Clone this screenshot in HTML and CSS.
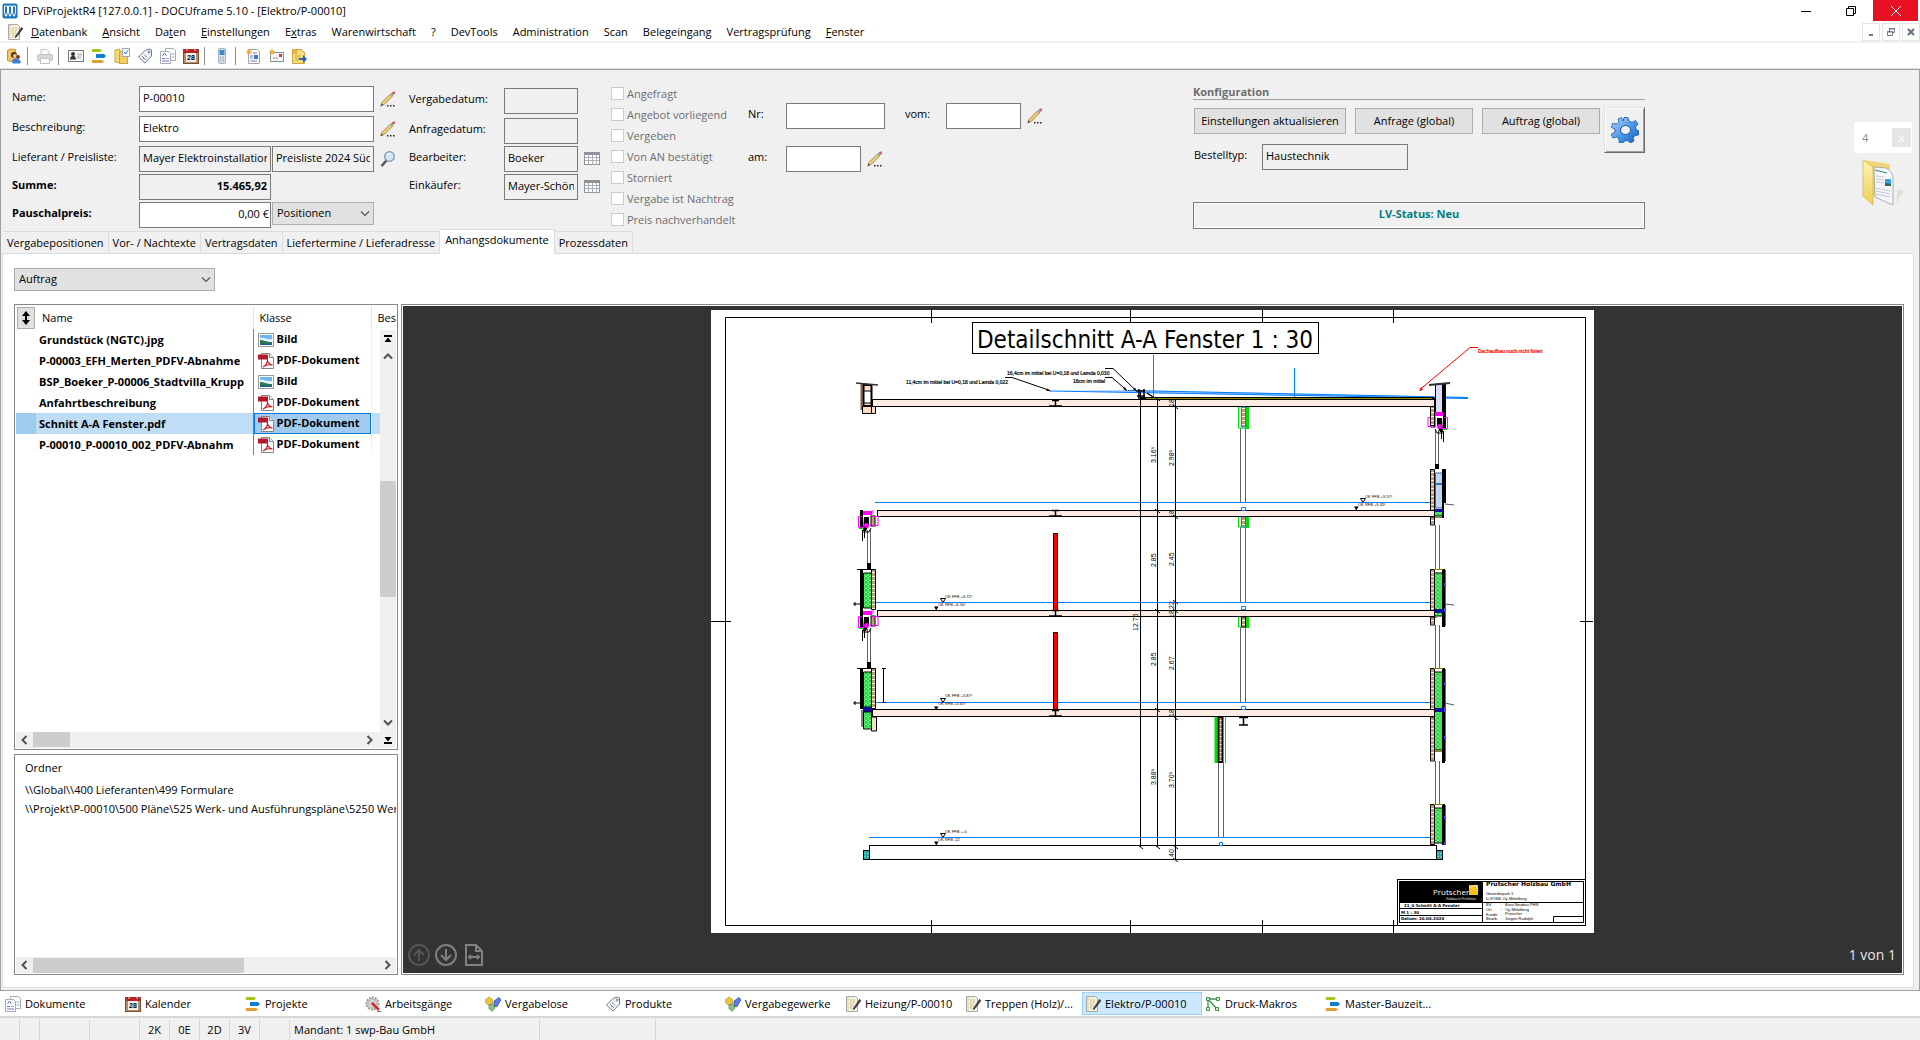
FILE: index.html
```html
<!DOCTYPE html>
<html lang="de">
<head>
    <meta charset="UTF-8">
    <meta name="viewport" content="width=device-width, initial-scale=1.0">
    <title>DFViProjektR4 [127.0.0.1] - DOCUframe 5.10 - [Elektro/P-00010]</title>
    <link rel="stylesheet" href="styles.css">
</head>
<body>
    <!-- Icon sprite -->
    <svg class="sprite" aria-hidden="true">
        <defs>
            <linearGradient id="gGear" x1="0" y1="0" x2="1" y2="1">
                <stop offset="0" stop-color="#b9d6f5"/>
                <stop offset="0.5" stop-color="#4f9ae8"/>
                <stop offset="1" stop-color="#0d5cc0"/>
            </linearGradient>
            <linearGradient id="gFolder" x1="0" y1="0" x2="0" y2="1">
                <stop offset="0" stop-color="#fff2b4"/>
                <stop offset="1" stop-color="#f0d055"/>
            </linearGradient>
        </defs>
        <symbol id="i-app" viewBox="0 0 16 16">
            <rect x="0.5" y="0.5" width="15" height="15" rx="2" fill="#1d75bb"/>
            <path d="M2.5 3h3v6l-1 4h-1l-1-4zM6.5 3h3v6l-1 4h-1l-1-4zM10.5 3h3v6l-1 4h-1l-1-4z" fill="#1d75bb" stroke="#fff" stroke-width="1"/>
        </symbol>
        <symbol id="i-note" viewBox="0 0 16 16">
            <path d="M1.5 .5h9l2 2v13h-11z" fill="#f4f2e6" stroke="#a9a9a9"/>
            <path d="M3 1v14" stroke="#b9a777" stroke-dasharray="1 1"/>
            <path d="M5 4h5M5 6h5M5 8h4M5 10h4M5 12h5" stroke="#d9b34c" stroke-dasharray="2 1"/>
            <path d="M14.5 3.5L9 11.5l-1 2 2-1 6-8z" fill="#444" stroke="#222" stroke-width="0.6"/>
        </symbol>
        <symbol id="i-user" viewBox="0 0 16 16">
            <path d="M1.5 2.5l3-1.5 5 .5v9l-4 3-4-1z" fill="#f1c55c" stroke="#c99327"/>
            <circle cx="8" cy="7" r="3" fill="#5a3418"/>
            <circle cx="9" cy="8" r="2" fill="#edc19a"/>
            <circle cx="12" cy="9" r="2" fill="#6b4020"/>
            <path d="M6 14c0-4 6-5 9 0l-1 1.500H7z" fill="#3d7fd8"/>
        </symbol>
        <symbol id="i-printer" viewBox="0 0 16 16">
            <path d="M4 6V1.500h6l2 2V6" fill="#fafafa" stroke="#c8c8c8"/>
            <rect x="0.500" y="6.500" width="15" height="6" rx="1" fill="#d8d8d8" stroke="#c0c0c0"/>
            <rect x="3.500" y="10.500" width="9" height="5" fill="#fff" stroke="#c4c4c4"/>
        </symbol>
        <symbol id="i-card" viewBox="0 0 16 16">
            <rect x="0.500" y="2.500" width="15" height="11" fill="#fafafa" stroke="#7a7a7a"/>
            <circle cx="5" cy="6" r="2" fill="#333"/>
            <path d="M2 11.500c0-5 6-5 6 0z" fill="#333"/>
            <path d="M9 6h5M9 8h5M9 10h4" stroke="#aaa"/>
        </symbol>
        <symbol id="i-bars" viewBox="0 0 16 16">
            <path d="M1 1h8l2 1.500L9 4H1z" fill="#a5c514"/>
            <path d="M5 6h8l2 2-2 2H5z" fill="#0f7fd0"/>
            <path d="M1 12h10l2 1.500-2 1.500H1z" fill="#e0a033"/>
        </symbol>
        <symbol id="i-shelf" viewBox="0 0 16 16">
            <path d="M1 2l5-1v14l-5-1z" fill="#f5d978" stroke="#cba53a"/>
            <rect x="5.500" y="3.500" width="8" height="12" fill="#f1cd62" stroke="#cba53a"/>
            <rect x="8.500" y="0.500" width="7" height="8" fill="#fff" stroke="#9ab"/>
            <path d="M10 4l1.500 2L14 2.500" fill="none" stroke="#1e6fc4"/>
        </symbol>
        <symbol id="i-tag" viewBox="0 0 16 16">
            <path d="M1.500 9L8 2.500 12 1l2.500 1v6L8 15z" fill="#f2f5f8" stroke="#6f7c88"/>
            <circle cx="12" cy="4" r="1" fill="#fff" stroke="#6f7c88"/>
            <path d="M5 8l4 4M7 6.500l3 3M6 10l1 1" stroke="#7886a0"/>
        </symbol>
        <symbol id="i-docs" viewBox="0 0 16 16">
            <path d="M5.500.5h8l2 2v10h-10z" fill="#fff" stroke="#a8adb5"/>
            <path d="M.5 3.500h8l2 2v10H.5z" fill="#fff" stroke="#a8adb5"/>
            <path d="M2.500 8l2-3 2 3M2 10.500h3M2 13h7" fill="none" stroke="#6674c8"/>
            <path d="M6 10.500h3M11.500 6h3M11.500 9h3" stroke="#7fb0c8"/>
        </symbol>
        <symbol id="i-cal" viewBox="0 0 16 16">
            <rect x="0.500" y="1.500" width="15" height="14" fill="#b58d66" stroke="#7a5035"/>
            <rect x="1" y="1" width="14" height="4" fill="#b5241c"/>
            <rect x="3" y="5" width="10" height="9" fill="#f4efe8"/>
            <path d="M4 0v3M12 0v3" stroke="#ddd"/>
            <text x="8" y="12" class="cal-day">28</text>
        </symbol>
        <symbol id="i-phone" viewBox="0 0 16 16">
            <rect x="4.500" y="0.500" width="7" height="15" rx="1.500" fill="#dfe7ee" stroke="#9fb0bf"/>
            <rect x="5.500" y="2" width="5" height="5" fill="#3a8ad6"/>
            <path d="M6 9h4M6 11h4M6 13h4" stroke="#8796a5" stroke-dasharray="1 .5"/>
        </symbol>
        <symbol id="i-newdoc" viewBox="0 0 16 16">
            <path d="M3.500 1.500h9l2 2v12h-11z" fill="#fff" stroke="#a0a6ae"/>
            <path d="M8 5h4M5 8h3M5 10h3M5 13h7" stroke="#6f83a8"/>
            <rect x="9" y="7" width="4" height="4" fill="#3f6fd0"/>
            <path d="M4 1v6M1 4h6M2 2l4 4M6 2L2 6" stroke="#f0a62c"/>
        </symbol>
        <symbol id="i-newmail" viewBox="0 0 16 16">
            <rect x="2.500" y="4.500" width="13" height="9" fill="#f7f7f7" stroke="#8f8f8f"/>
            <rect x="11" y="6" width="3" height="3" fill="#d23b30"/>
            <path d="M5 10h5" stroke="#999"/>
            <path d="M4 1v6M1 4h6M2 2l4 4M6 2L2 6" stroke="#f0a62c"/>
        </symbol>
        <symbol id="i-export" viewBox="0 0 16 16">
            <path d="M1.500 1.500h9l3 3v11h-12z" fill="#f7dd82" stroke="#c8a33e"/>
            <path d="M4 8h6M4 10h4M4 12h4" stroke="#c8a33e"/>
            <path d="M8 10h4V7l4 4-4 4v-3H8z" fill="#1f62c8"/>
            <path d="M4 1v6M1 4h6M2 2l4 4M6 2L2 6" stroke="#f0a62c"/>
        </symbol>
        <symbol id="i-pencil" viewBox="0 0 16 16">
            <path d="M1 14.500l1-3L10.500 3l2 2-8.500 8.500z" fill="#f5d272" stroke="#8a6a32" stroke-width="0.8"/>
            <path d="M.3 15.500l1.200-3 1.500 1.500z" fill="#5a4a38"/>
            <path d="M11.500 2l1.500-1.500h2v2L13.500 4z" fill="#d9606a"/>
            <path d="M10 3.500L11.500 2l2 2L12 5.500z" fill="#7fae8e"/>
            <path d="M7 14h1.500v1.500H7zM10 14h1.500v1.500H10zM13 14h1.500v1.500H13z" fill="#222"/>
        </symbol>
        <symbol id="i-lens" viewBox="0 0 16 16">
            <path d="M6.500 9.500L1.500 15" stroke="#555" stroke-width="2.500"/>
            <circle cx="9.500" cy="5.500" r="4.800" fill="#cfe6fa" stroke="#7e96ad" stroke-width="1.300"/>
            <path d="M7 4.500c1-2 3-2 4-1.500" fill="none" stroke="#fff"/>
        </symbol>
        <symbol id="i-grid" viewBox="0 0 16 14">
            <rect x="0.500" y="0.500" width="15" height="12" fill="#fff" stroke="#8d9399"/>
            <path d="M0 1.500h16" stroke="#8d9399" stroke-width="3"/>
            <path d="M1 5.500h14M1 8.500h14M4.500 3v10M8.500 3v10M12.500 3v10" stroke="#a9afb6"/>
        </symbol>
        <symbol id="i-gear" viewBox="0 0 28 26">
            <path d="M12 4l1-3.500h4L18 4l3 1.500 3.500-2 2.500 3.500-2.500 3 .5 2.500 3 1.500-.5 4-3.500.5-2 2.500 1 3-3.500 2-3-2.500-3 .5-1.500 2.500-4-1V22l-2.500-2-3.500 1-2-3.500L4 15v-3L.5 10.500l1-4L6 7l2-2-1-3 3.500-1.500z" fill="url(#gGear)" stroke="#1456a8" stroke-width="0.800"/>
            <ellipse cx="14.500" cy="13" rx="5" ry="4.500" fill="#efefef" stroke="#1456a8"/>
        </symbol>
        <symbol id="i-folder" viewBox="0 0 42 48">
            <path d="M34 44l8-12-6-2z" fill="#ddd"/>
            <path d="M1 1l27 4v34l-17-2z" fill="#f0d676"/>
            <path d="M12 8l12 1c5 3 7 6 7 10v27l-18-8z" fill="#f4f6fa" stroke="#8b95a0" stroke-width="0.700"/>
            <path d="M13 11l12 3" stroke="#1b8a8a"/>
            <path d="M14 17l8 1M14 20l8 1M14 23l8 1M14 29l14 3M14 32l14 3M14 35l14 3" stroke="#c3cad6"/>
            <rect x="23" y="20" width="6" height="7" fill="#3aa2d8"/>
            <path d="M23 27v-3l6 1v2z" fill="#2d6e4d"/>
            <path d="M1 1l10 7v38L1 37z" fill="url(#gFolder)" stroke="#d6b341" stroke-width="0.700"/>
        </symbol>
        <symbol id="i-image" viewBox="0 0 16 14">
            <rect x="0.500" y="0.500" width="15" height="13" fill="#fff" stroke="#9a9a9a"/>
            <rect x="2" y="2" width="12" height="10" fill="#6cb6ea"/>
            <path d="M2 5c4-1 7 2 12 1v3H2z" fill="#e6f4fb"/>
            <path d="M2 7c4 0 6 2 12 2v3H2z" fill="#2b7a4f"/>
            <path d="M2 10.500h12V12H2z" fill="#1e5f9a"/>
        </symbol>
        <symbol id="i-pdf" viewBox="0 0 16 16">
            <path d="M3.500.5h8l4 4v11h-12z" fill="#fff" stroke="#8c8080"/>
            <path d="M11.500.5v4h4" fill="#eee" stroke="#8c8080"/>
            <rect x="0" y="1.500" width="10" height="5" fill="#b3182a"/>
            <path d="M5 14c3-1 5-5 4.500-7.500C9 8 11 11.500 14.500 12 11 11 7.500 12 5 14z" fill="none" stroke="#c0202c" stroke-width="1.200"/>
        </symbol>
        <symbol id="i-work" viewBox="0 0 16 16">
            <circle cx="7.500" cy="7.500" r="6" fill="#e4e4e4" stroke="#9a9a9a" stroke-width="2" stroke-dasharray="2 1"/>
            <circle cx="7.500" cy="7.500" r="4" fill="#e4e4e4" stroke="#aaa"/>
            <circle cx="7.500" cy="7.500" r="1.500" fill="#fff" stroke="#999"/>
            <path d="M7 7l7 7" stroke="#cf2b2b" stroke-width="2.500"/>
            <path d="M12 15.500h4" stroke="#777"/>
        </symbol>
        <symbol id="i-lots" viewBox="0 0 16 16">
            <path d="M0 4l4-3 4 3-1 4-4 1-3-3z" fill="#e8c63c" stroke="#b08f1e" stroke-width="0.700"/>
            <path d="M9 5l5-3.500 2 2-4 7H9z" fill="#5f7ae8" stroke="#2b3f9f" stroke-width="0.700"/>
            <path d="M4 9l4-1 2 4-3 3.500-3-3z" fill="#8fbf88" stroke="#55845a" stroke-width="0.700"/>
        </symbol>
        <symbol id="i-macro" viewBox="0 0 16 16">
            <path d="M3 3l9 0M3 3v9M3 3l8 9" fill="none" stroke="#3e8f4c" stroke-width="1.300"/>
            <path d="M1.500 1.500h3v3h-3zM1.500 11.500h3v3h-3zM11.500 1.500h3v3h-3zM10.500 11.500h3v3h-3z" fill="#d7eed9" stroke="#3e8f4c"/>
        </symbol>
        <symbol id="i-chevron" viewBox="0 0 10 6"><path d="M1 .5l4 4 4-4" fill="none" stroke="#555" stroke-width="1.200"/></symbol>
        <symbol id="i-left" viewBox="0 0 8 10"><path d="M6.500 1l-4 4 4 4" fill="none" stroke="#505050" stroke-width="2"/></symbol>
        <symbol id="i-right" viewBox="0 0 8 10"><path d="M1.500 1l4 4-4 4" fill="none" stroke="#505050" stroke-width="2"/></symbol>
        <symbol id="i-up" viewBox="0 0 10 8"><path d="M1 6.500l4-4 4 4" fill="none" stroke="#505050" stroke-width="2"/></symbol>
        <symbol id="i-down" viewBox="0 0 10 8"><path d="M1 1.500l4 4 4-4" fill="none" stroke="#505050" stroke-width="2"/></symbol>
        <symbol id="i-top" viewBox="0 0 8 8"><path d="M0 0h8v2H0zM4 2.500L7.500 7h-7z" fill="#000"/></symbol>
        <symbol id="i-bottom" viewBox="0 0 8 8"><path d="M0 6h8v2H0zM4 5.500L.5 1h7z" fill="#000"/></symbol>
    </svg>

    <header class="titlebar">
        <svg class="icon"><use href="#i-app"/></svg>
        <span class="title">DFViProjektR4 [127.0.0.1] - DOCUframe 5.10 - [Elektro/P-00010]</span>
        <button class="win-btn" aria-label="Minimieren"><svg width="10" height="10"><path d="M0 5.500h10" stroke="#000"/></svg></button>
        <button class="win-btn" aria-label="Wiederherstellen"><svg width="10" height="10"><path d="M.5 2.500h7v7h-7zM2.500 2V.5h7v7H8" fill="none" stroke="#000"/></svg></button>
        <button class="win-btn close" aria-label="Schließen"><svg width="10" height="10"><path d="M0 0l10 10M10 0L0 10" stroke="#fff"/></svg></button>
    </header>

    <nav class="menubar">
        <svg class="icon"><use href="#i-note"/></svg>
        <button><u>D</u>atenbank</button>
        <button><u>A</u>nsicht</button>
        <button>Da<u>t</u>en</button>
        <button><u>E</u>instellungen</button>
        <button>E<u>x</u>tras</button>
        <button>Warenwirtschaft</button>
        <button>?</button>
        <button>DevTools</button>
        <button>Administration</button>
        <button>Scan</button>
        <button>Belegeingang</button>
        <button>Vertragsprüfung</button>
        <button><u>F</u>enster</button>
        <div class="mdi">
            <button aria-label="Fenster minimieren"><svg width="10" height="10"><path d="M3 8h4" stroke="#6b7a8a" stroke-width="2"/></svg></button>
            <button aria-label="Fenster wiederherstellen"><svg width="10" height="10"><path d="M1.500 4.500h5v4h-5zM3.500 4V1.500h5v4H7M1 5h6M3 2h6" fill="none" stroke="#6b7a8a"/></svg></button>
            <button aria-label="Fenster schließen"><svg width="10" height="10"><path d="M2 2l6 6M8 2L2 8" stroke="#5f6f80" stroke-width="2"/></svg></button>
        </div>
    </nav>

    <div class="toolbar">
        <button aria-label="Adressen"><svg class="icon"><use href="#i-user"/></svg></button>
        <span class="sep"></span>
        <button aria-label="Drucken"><svg class="icon"><use href="#i-printer"/></svg></button>
        <span class="sep"></span>
        <button aria-label="Kontakte"><svg class="icon"><use href="#i-card"/></svg></button>
        <button aria-label="Projekte"><svg class="icon"><use href="#i-bars"/></svg></button>
        <button aria-label="Ablage"><svg class="icon"><use href="#i-shelf"/></svg></button>
        <button aria-label="Produkte"><svg class="icon"><use href="#i-tag"/></svg></button>
        <button aria-label="Dokumente"><svg class="icon"><use href="#i-docs"/></svg></button>
        <button aria-label="Kalender"><svg class="icon"><use href="#i-cal"/></svg></button>
        <span class="sep"></span>
        <button aria-label="Telefon"><svg class="icon"><use href="#i-phone"/></svg></button>
        <span class="sep"></span>
        <button aria-label="Neues Dokument"><svg class="icon"><use href="#i-newdoc"/></svg></button>
        <button aria-label="Neue E-Mail"><svg class="icon"><use href="#i-newmail"/></svg></button>
        <button aria-label="Export"><svg class="icon"><use href="#i-export"/></svg></button>
    </div>

    <main class="workspace">
        <form class="form">
            <div class="general">
                <label for="name">Name:</label>
                <input class="wide" id="name" value="P-00010">
                <button type="button" class="edit" aria-label="Name bearbeiten"><svg class="icon"><use href="#i-pencil"/></svg></button>

                <label for="beschreibung">Beschreibung:</label>
                <input class="wide" id="beschreibung" value="Elektro">
                <button type="button" class="edit" aria-label="Beschreibung bearbeiten"><svg class="icon"><use href="#i-pencil"/></svg></button>

                <label for="lieferant">Lieferant / Preisliste:</label>
                <input class="half" id="lieferant" value="Mayer Elektroinstallation" readonly>
                <input id="preisliste" aria-label="Preisliste" value="Preisliste 2024 Süd" readonly>
                <button type="button" class="edit" aria-label="Suchen"><svg class="icon"><use href="#i-lens"/></svg></button>

                <label class="strong" for="summe">Summe:</label>
                <input class="half sum" id="summe" value="15.465,92" readonly>
                <span></span><span></span>

                <label class="strong" for="pauschal">Pauschalpreis:</label>
                <input class="half price" id="pauschal" value="0,00 €">
                <div class="select">
                    <select aria-label="Bezug"><option>Positionen</option></select>
                    <svg class="chevron"><use href="#i-chevron"/></svg>
                </div>
            </div>

            <div class="dates">
                <label for="vergabe">Vergabedatum:</label>
                <input id="vergabe" readonly><span></span>
                <label for="anfrage">Anfragedatum:</label>
                <input id="anfrage" readonly><span></span>
                <label for="bearbeiter">Bearbeiter:</label>
                <input id="bearbeiter" value="Boeker" readonly>
                <button type="button" class="edit" aria-label="Bearbeiter wählen"><svg class="icon"><use href="#i-grid"/></svg></button>
                <label for="einkaeufer">Einkäufer:</label>
                <input id="einkaeufer" value="Mayer-Schön" readonly>
                <button type="button" class="edit" aria-label="Einkäufer wählen"><svg class="icon"><use href="#i-grid"/></svg></button>
            </div>

            <div class="checks">
                <label><input type="checkbox" disabled>Angefragt</label>
                <label><input type="checkbox" disabled>Angebot vorliegend</label>
                <label><input type="checkbox" disabled>Vergeben</label>
                <label><input type="checkbox" disabled>Von AN bestätigt</label>
                <label><input type="checkbox" disabled>Storniert</label>
                <label><input type="checkbox" disabled>Vergabe ist Nachtrag</label>
                <label><input type="checkbox" disabled>Preis nachverhandelt</label>
            </div>

            <div class="offer">
                <div class="offer-row">
                    <label for="nr">Nr:</label>
                    <input class="nr" id="nr">
                    <label class="vom" for="vom">vom:</label>
                    <input id="vom">
                    <button type="button" class="edit" aria-label="Angebot bearbeiten"><svg class="icon"><use href="#i-pencil"/></svg></button>
                </div>
                <div class="offer-row">
                    <label for="am">am:</label>
                    <input id="am">
                    <button type="button" class="edit" aria-label="Datum bearbeiten"><svg class="icon"><use href="#i-pencil"/></svg></button>
                </div>
            </div>

            <div class="config">
                <h2>Konfiguration</h2>
                <div class="config-body">
                    <div class="config-actions">
                        <button type="button" class="btn">Einstellungen aktualisieren</button>
                        <button type="button" class="btn">Anfrage (global)</button>
                        <button type="button" class="btn">Auftrag (global)</button>
                        <div class="order-type">
                            <label for="bestelltyp">Bestelltyp:</label>
                            <input id="bestelltyp" value="Haustechnik" readonly>
                        </div>
                    </div>
                    <button type="button" class="gear" aria-label="Einstellungen"><svg width="28" height="26"><use href="#i-gear"/></svg></button>
                </div>
                <div class="status">LV-Status: Neu</div>
            </div>

            <div class="drop">
                <div class="count"><span>4</span><button type="button" aria-label="Leeren">x</button></div>
                <svg width="42" height="48"><use href="#i-folder"/></svg>
            </div>
        </form>

        <div class="tabs" role="tablist">
            <button role="tab">Vergabepositionen</button>
            <button role="tab">Vor- / Nachtexte</button>
            <button role="tab">Vertragsdaten</button>
            <button role="tab">Liefertermine / Lieferadresse</button>
            <button role="tab" class="active">Anhangsdokumente</button>
            <button role="tab">Prozessdaten</button>
        </div>

        <section class="tab-page">
            <div class="select type-select">
                <select aria-label="Dokumentart"><option>Auftrag</option></select>
                <svg class="chevron"><use href="#i-chevron"/></svg>
            </div>

            <div class="panes">
                <div class="left">
                    <div class="box files">
                        <div class="file-area">
                            <table>
                                <colgroup><col class="c-sort"><col class="c-name"><col class="c-class"><col></colgroup>
                                <thead>
                                    <tr>
                                        <th><button class="sort" aria-label="Sortierung"><svg width="10" height="14"><path d="M5 0l4 5H6v4h3l-4 5-4-5h3V5H1z"/></svg></button></th>
                                        <th>Name</th><th>Klasse</th><th>Beschreibung</th>
                                    </tr>
                                </thead>
                                <tbody>
                                    <tr><td></td><td>Grundstück (NGTC).jpg</td><td><svg class="icon"><use href="#i-image"/></svg>Bild</td><td></td></tr>
                                    <tr><td></td><td>P-00003_EFH_Merten_PDFV-Abnahme</td><td><svg class="icon"><use href="#i-pdf"/></svg>PDF-Dokument</td><td></td></tr>
                                    <tr><td></td><td>BSP_Boeker_P-00006_Stadtvilla_Krupp</td><td><svg class="icon"><use href="#i-image"/></svg>Bild</td><td></td></tr>
                                    <tr><td></td><td>Anfahrtbeschreibung</td><td><svg class="icon"><use href="#i-pdf"/></svg>PDF-Dokument</td><td></td></tr>
                                    <tr class="selected"><td></td><td>Schnitt A-A Fenster.pdf</td><td><svg class="icon"><use href="#i-pdf"/></svg>PDF-Dokument</td><td></td></tr>
                                    <tr><td></td><td>P-00010_P-00010_002_PDFV-Abnahm</td><td><svg class="icon"><use href="#i-pdf"/></svg>PDF-Dokument</td><td></td></tr>
                                </tbody>
                            </table>
                            <div class="vscroll">
                                <svg width="8" height="8"><use href="#i-top"/></svg>
                                <svg width="10" height="8"><use href="#i-up"/></svg>
                                <div class="track"><div class="thumb"></div></div>
                                <svg width="10" height="8"><use href="#i-down"/></svg>
                            </div>
                        </div>
                        <div class="hscroll">
                            <svg width="8" height="10"><use href="#i-left"/></svg>
                            <div class="thumb short"></div>
                            <svg class="end" width="8" height="10"><use href="#i-right"/></svg>
                            <svg class="last" width="8" height="8"><use href="#i-bottom"/></svg>
                        </div>
                    </div>
                    <div class="box folders">
                        <div class="folder-list">
                            <h3>Ordner</h3>
                            <ul>
                                <li>\\Global\\400 Lieferanten\499 Formulare</li>
                                <li>\\Projekt\P-00010\500 Pläne\525 Werk- und Ausführungspläne\5250 Werkpläne</li>
                            </ul>
                        </div>
                        <div class="hscroll">
                            <svg width="8" height="10"><use href="#i-left"/></svg>
                            <div class="thumb long"></div>
                            <svg class="end" width="8" height="10"><use href="#i-right"/></svg>
                        </div>
                    </div>
                </div>

                <div class="viewer">
                    <svg class="sheet" viewBox="711 310 883 623" role="img" aria-label="Detailschnitt A-A Fenster">
                        <defs>
                            <pattern id="insul" width="4" height="4" patternUnits="userSpaceOnUse">
                                <rect width="4" height="4" fill="#fff"/>
                                <path d="M0 0l2 2 2-2M0 3l4 0" fill="none" stroke="#10d82c" stroke-width="1.300"/>
                            </pattern>
                            <pattern id="wood" width="6" height="4" patternUnits="userSpaceOnUse">
                                <rect width="6" height="4" fill="#c49a72"/>
                                <path d="M0 .5h6" stroke="#fff"/>
                            </pattern>
                            <pattern id="teal" width="3" height="3" patternUnits="userSpaceOnUse">
                                <rect width="3" height="3" fill="#1fa8a8"/>
                                <path d="M0 2l2-1" stroke="#bfe8e8" stroke-width="0.600"/>
                            </pattern>
                            <g id="beam"><path d="M-3 .5h7M.5 0v6M-6 6h13" stroke="#000" stroke-width="1.500"/></g>
                            <g id="level">
                                <path d="M4.500-4.500h5l-2.500 4z" fill="#fff" stroke="#000"/>
                                <path d="M-2 3.500h4.500L.3 7.500z"/>
                            </g>
                            <!-- window head with roller shutter box -->
                            <g id="head">
                                <path d="M2 0h3v18H2zM6 7h5v8l-3 6H5z"/>
                                <path d="M5 2h9M5 4h9" stroke="#ff00ff" stroke-width="2"/>
                                <rect x="13" y="6" width="4" height="10" fill="#c49a72" stroke="#000"/>
                                <path d="M4 6.500H.5v11H6M14 6.500h6v9h-6M15 0v4" fill="none" stroke="#ff00ff"/>
                                <circle cx="8.500" cy="15.500" r="2.500" fill="#ff00ff"/>
                                <path d="M1 18.500h4" stroke="#00e000"/>
                                <path d="M4.500 20v11M6.500 20v8M5 22h6l2-4" fill="none" stroke="#000"/>
                            </g>
                        </defs>
                        <rect x="711" y="310" width="883" height="623" fill="#fff"/>
                        <g class="ink">
                            <path d="M725.500 317.500h860v608h-860z"/>
                            <path d="M931.500 310v13M1130.500 310v13M1262.500 310v13M1393.500 310v13M931.500 920v13M1130.500 920v13M1262.500 920v13M1393.500 920v13M711 621.500h20M1580 621.500h13"/>
                            <rect x="972.500" y="322.500" width="346" height="31"/>
                        </g>
                        <text class="sheet-title" x="1145" y="348">Detailschnitt A-A Fenster 1 : 30</text>

                        <!-- roof insulation and finished floor levels -->
                        <path d="M1128 390l340 7v2l-418-8z" fill="#a9c8ff"/>
                        <g class="blue">
                            <path d="M1128 390.500l340 7M1050 391l418 7.500M1153.500 355v43M1294.500 368v31"/>
                            <path d="M875 502.500h556M875 602.500h556M876 702.500h555M869 837.500h562"/>
                        </g>

                        <!-- slabs -->
                        <g class="slab">
                            <rect x="872.500" y="399.500" width="562" height="7"/>
                            <rect x="877.500" y="510.500" width="557" height="6"/>
                            <rect x="877.500" y="610.500" width="557" height="6"/>
                            <rect x="872.500" y="709.500" width="562" height="7"/>
                        </g>
                        <path d="M1140 398h294" stroke="#000" stroke-width="2"/>
                        <path d="M1146 398.500h286" stroke="#8a8a00"/>
                        <rect class="ink" x="869.500" y="845.500" width="567" height="14"/>
                        <rect x="863.500" y="850.500" width="6" height="9" fill="url(#teal)" stroke="#000"/>
                        <rect x="1436.500" y="850.500" width="6" height="9" fill="url(#teal)" stroke="#000"/>
                        <use href="#beam" x="1055" y="400"/>
                        <use href="#beam" x="1055" y="510"/>
                        <use href="#beam" x="1055" y="610"/>
                        <use href="#beam" x="1055" y="710"/>
                        <path d="M1239 717.500h9M1239 725h9M1243.500 717v8" stroke="#000" stroke-width="1.500"/>
                        <path d="M1053.500 533.500h4v77h-4zM1053.500 632.500h4v77h-4z" fill="#f00" stroke="#000"/>

                        <!-- columns -->
                        <path class="glass" d="M1240.500 428v74M1245.500 428v74M1240.500 527v75M1245.500 527v75M1240.500 627v75M1245.500 627v75M1218.500 763v74M1223.500 763v74"/>
                        <g fill="#fff" stroke="#00e000">
                            <path d="M1238.500 407v21h10v-21M1238.500 517v10h10v-10M1238.500 617v10h10v-10"/>
                            <path d="M1247.500 407v22M1247.500 517v11M1247.500 617v11M1216 717v46" stroke-width="3"/>
                            <path d="M1225.500 717v46"/>
                        </g>
                        <path d="M1241.500 407h4v20h-4zM1241.500 517h4v10h-4z" fill="url(#wood)" stroke="#0080ff"/>
                        <path d="M1241.500 617h4v10h-4z" fill="url(#wood)" stroke="#000"/>
                        <path d="M1218.500 717h4v45h-4z" fill="url(#wood)" stroke="#000" stroke-width="2"/>
                        <path class="blue" d="M1241.500 507.500h4v3h-4zM1241.500 606.500h4v3h-4zM1241.500 706.500h4v3h-4zM1219.500 842.500h3v3h-3z"/>

                        <!-- left wall -->
                        <path d="M861.500 384v26" stroke="#8a5a3a" stroke-width="2"/>
                        <path d="M863.500 385h8v21h-8z" fill="#fcd9c8" stroke="#000" stroke-width="2"/>
                        <path d="M864 391h7v12h-7z" fill="#fff" stroke="#000"/>
                        <path d="M862.500 406.500h13v7h-13zM871.500 400v13" fill="#fcd9c8" stroke="#000"/>
                        <path d="M856 383l22 2" stroke="#333" stroke-width="1.500"/>
                        <path class="glass" d="M867.500 530v36M870.500 530v36M867.500 629v36M870.500 629v36"/>
                        <use href="#head" x="858" y="510"/>
                        <use href="#head" x="858" y="610"/>
                        <g id="sill">
                            <path d="M860 569h3v41h-3zM867 563h4v6h-4z"/>
                            <path d="M863.500 573h8v35h-8z" fill="url(#insul)" stroke="#000"/>
                            <path d="M871.500 569.500h4v40h-4z" fill="url(#wood)" stroke="#000"/>
                            <path d="M857 569.500h18M853 604l8 0M855 602v4" stroke="#000"/>
                        </g>
                        <use href="#sill" y="99"/>
                        <path d="M863 707h9v5h-9z" fill="#10109a"/>
                        <path d="M863.500 712h8v17h-8z" fill="url(#insul)" stroke="#000"/>
                        <path d="M871.500 717h5v14h-5z" fill="#fcd9c8" stroke="#000"/>
                        <path d="M883.500 668v34M882 668.500h4M882 702.500h4M862 710v17" stroke="#000"/>

                        <!-- right wall -->
                        <path class="glass" d="M1435.500 430v35M1438.500 430v35M1435.500 525v44M1439.500 525v44M1435.500 625v43M1439.500 625v43M1435.500 761v43M1439.500 761v43"/>
                        <path d="M1435.500 384h7v31h-7z" fill="#dcdcfa" stroke="#000"/>
                        <path d="M1443 384h3v45h-3zM1434 398h2v10h-2z"/>
                        <path d="M1429 385l21-2" stroke="#333" stroke-width="2"/>
                        <use href="#head" transform="translate(1448 411) scale(-1 1)"/>
                        <g fill="url(#wood)" stroke="#000">
                            <path d="M1430.500 406.500h4v19h-4zM1430.500 469.500h4v41h-4zM1430.500 517h4v8h-4zM1430.500 569.500h4v41h-4zM1430.500 617h4v8h-4zM1430.500 668.500h4v41h-4zM1430.500 717h4v44h-4zM1430.500 804.500h4v40h-4z"/>
                        </g>
                        <path d="M1435.500 473h7v35h-7z" fill="#c3d6f0" stroke="#2f6fb5"/>
                        <path d="M1435 484h7" stroke="#2f6fb5" stroke-width="2"/>
                        <path d="M1442 469h4v34h-4zM1442 503h2v15h-2zM1442 569h3v58h-3zM1442 668h3v95h-3zM1442 804h3v41h-3zM1435 464h4v5h-4z"/>
                        <g fill="url(#insul)" stroke="#000">
                            <path d="M1434.500 511h8v5h-8zM1434.500 573h8v43h-8zM1434.500 672h8v78h-8zM1434.500 808h8v35h-8z"/>
                        </g>
                        <path d="M1435 509h8v3h-8zM1435 609h8v4h-8zM1435 708h8v4h-8z" fill="#10109a"/>
                        <path d="M1435 517.500h7M1435 751.500h7M1435 617.500h2M1434 569.500h9M1434 668.500h9M1434 804.500h9" stroke="#8a8a00"/>
                        <path d="M1445.500 570v56M1445.500 669v92M1445.500 805v38" stroke="#8a5a3a"/>
                        <path d="M1445 504l9 1M1445 604l9 1M1445 703l9 2" stroke="#555"/>
                        <path d="M1444 583h2v3h-2zM1444 608h2v4h-2zM1444 682h2v3h-2zM1444 707h2v5h-2zM1444 736h2v3h-2zM1444 816h2v3h-2zM1444 842h2v3h-2z" fill="#4040ff"/>

                        <!-- dimension chains -->
                        <path class="ink" d="M1140.500 392v455M1157.500 399v448M1175.500 399v461"/>
                        <path class="ink" d="M1138 845l5 4M1155 845l5 4M1173 845l5 4M1173 858l5 4M1155 397l5 4M1155 509l5 4M1155 609l5 4M1155 708l5 4M1173 405l5 4M1173 515l5 4M1173 600l5 4M1173 609l5 4M1173 716l5 4"/>
                        <path d="M1137 391h8M1137 396h8M1139 389v10M1144 389v10M1147 393l6 4" stroke="#000" stroke-width="1.500"/>
                        <g class="dim">
                            <text transform="translate(1156 463) rotate(-90)">3.16⁵</text>
                            <text transform="translate(1174 466) rotate(-90)">2.98⁵</text>
                            <text transform="translate(1156 567) rotate(-90)">2.85</text>
                            <text transform="translate(1174 566) rotate(-90)">2.45</text>
                            <text transform="translate(1138 631) rotate(-90)">12.75</text>
                            <text transform="translate(1156 666) rotate(-90)">2.85</text>
                            <text transform="translate(1174 670) rotate(-90)">2.67</text>
                            <text transform="translate(1156 785) rotate(-90)">3.88⁵</text>
                            <text transform="translate(1174 788) rotate(-90)">3.70⁵</text>
                            <text transform="translate(1174 857) rotate(-90)">40</text>
                            <text transform="translate(1174 407) rotate(-90)">18</text>
                            <text transform="translate(1174 518) rotate(-90)">18</text>
                            <text transform="translate(1174 609) rotate(-90)">22</text>
                            <text transform="translate(1174 618) rotate(-90)">18</text>
                            <text transform="translate(1174 717) rotate(-90)">18</text>
                        </g>

                        <!-- level marks -->
                        <use href="#level" x="936" y="603"/>
                        <use href="#level" x="936" y="703"/>
                        <use href="#level" x="936" y="838"/>
                        <use href="#level" x="1356" y="503"/>
                        <g class="mark">
                            <text x="945" y="598">OK FFB +6.72⁵</text><text x="938" y="606">OK RFB +6.50⁵</text>
                            <text x="945" y="697">OK FFB +3.87⁵</text><text x="938" y="705">OK RFB +3.65⁵</text>
                            <text x="945" y="833">OK FFB +-0</text><text x="938" y="841">OK RFB -22</text>
                            <text x="1365" y="498">OK FFB +9.57⁵</text><text x="1358" y="506">OK RFB +9.35⁵</text>
                        </g>

                        <!-- notes -->
                        <g class="note">
                            <text x="1007" y="375">16,4cm im mittel bei U=0,18 und Lamda 0,030</text>
                            <text x="1073" y="383">18cm im mittel</text>
                            <text x="906" y="384">11,4cm im mittel bei U=0,18 und Lamda 0,022</text>
                            <text class="red" x="1478" y="353">Dachaufbau noch nicht fixiert</text>
                        </g>
                        <path class="ink" d="M1105 368.500h8l24 23M1105 377.500h7l15 13M1005 377.500h7l38 13"/>
                        <path d="M1137 391.500l-4-2 2-2zM1127 391l-4-2 2-2zM1051 391.500l-5-1 1-2z"/>
                        <path d="M1478 347.500h-8l-50 42" fill="none" stroke="#f00"/>
                        <path d="M1419 391l2-4 2 3z" fill="#f00"/>

                        <!-- title block -->
                        <rect x="1397.500" y="879.500" width="188" height="46" fill="#fff" stroke="#000"/>
                        <rect x="1399.500" y="881.500" width="184" height="41" fill="#fff" stroke="#000"/>
                        <rect x="1400" y="882" width="82" height="21"/>
                        <rect x="1469" y="885" width="9" height="10" fill="#f6c01c"/>
                        <path d="M1469 888l7-3 2 6" fill="none" stroke="#fff" stroke-width="0.700"/>
                        <path class="ink" d="M1482.500 882v41M1400 908.500h82M1400 915.500h82M1483 902.500h100M1553.500 923v-6.500h30"/>
                        <text class="logo" x="1433" y="895">Prutscher</text>
                        <text class="logo-sub" x="1446" y="900">Holzbau in Perfektion</text>
                        <g class="plate">
                            <text x="1404" y="907">21_0 Schnitt A-A Fenster</text>
                            <text x="1401" y="914">M 1 : 30</text>
                            <text x="1401" y="920">Datum: 20.04.2024</text>
                            <text class="firm" x="1486" y="886">Prutscher Holzbau GmbH</text>
                        </g>
                        <g class="mark">
                            <text x="1486" y="895">Gewerbepark 1</text><text x="1486" y="900">D-87466 Oy-Mittelberg</text>
                            <text x="1486" y="906">BV</text><text x="1501" y="906">:</text><text x="1505" y="906">Büro-Neubau PHN</text>
                            <text x="1486" y="911">Ort</text><text x="1501" y="911">:</text><text x="1505" y="911">Oy-Mittelberg</text>
                            <text x="1486" y="916">Kunde</text><text x="1501" y="916">:</text><text x="1505" y="915">Prutscher</text>
                            <text x="1486" y="920">Bearb.</text><text x="1501" y="920">:</text><text x="1505" y="920">Jürgen Rudolph</text>
                        </g>
                    </svg>
                    <div class="viewer-tools">
                        <button class="dim-btn" aria-label="Vorherige Seite"><svg width="22" height="22"><circle cx="11" cy="11" r="10"/><path d="M11 17V6M6 11l5-5 5 5"/></svg></button>
                        <button aria-label="Nächste Seite"><svg width="22" height="22"><circle cx="11" cy="11" r="10"/><path d="M11 5v11M6 11l5 5 5-5"/></svg></button>
                        <button class="fit" aria-label="Seitenbreite"><svg width="18" height="22"><path d="M1 1h10l6 6v14H1zM11 1v6h6M4 13h10M6 11l-2 2 2 2M12 11l2 2-2 2"/></svg></button>
                        <span class="pages">1 von 1</span>
                    </div>
                </div>
            </div>
        </section>
    </main>

    <nav class="taskbar">
        <button><svg class="icon"><use href="#i-docs"/></svg>Dokumente</button>
        <button><svg class="icon"><use href="#i-cal"/></svg>Kalender</button>
        <button><svg class="icon"><use href="#i-bars"/></svg>Projekte</button>
        <button><svg class="icon"><use href="#i-work"/></svg>Arbeitsgänge</button>
        <button><svg class="icon"><use href="#i-lots"/></svg>Vergabelose</button>
        <button><svg class="icon"><use href="#i-tag"/></svg>Produkte</button>
        <button><svg class="icon"><use href="#i-lots"/></svg>Vergabegewerke</button>
        <button><svg class="icon"><use href="#i-note"/></svg>Heizung/P-00010</button>
        <button><svg class="icon"><use href="#i-note"/></svg>Treppen (Holz)/...</button>
        <button class="active"><svg class="icon"><use href="#i-note"/></svg>Elektro/P-00010</button>
        <button><svg class="icon"><use href="#i-macro"/></svg>Druck-Makros</button>
        <button><svg class="icon"><use href="#i-bars"/></svg>Master-Bauzeit...</button>
    </nav>

    <footer class="statusbar">
        <span class="w20"></span><span class="w20"></span><span class="w50"></span><span class="w50"></span>
        <span class="w30">2K</span><span class="w30">0E</span><span class="w30">2D</span><span class="w30">3V</span><span class="w30"></span>
        <span class="client">Mandant: 1 swp-Bau GmbH</span><span class="w116"></span>
    </footer>
</body>
</html>
```

FILE: styles.css
```css
* {
    box-sizing: border-box;
}
body {
    margin: 0;
    height: 100vh;
    display: flex;
    flex-direction: column;
    background: #fff;
    color: #000;
    font-family: "Open Sans", "Noto Sans", sans-serif;
    font-size: 11px;
    line-height: 16px;
    overflow: hidden;
}
button, input, select {
    font: inherit;
    color: inherit;
    margin: 0;
    padding: 0;
    border: none;
    border-radius: 0;
    background: none;
}
button {
    display: flex;
    align-items: center;
    justify-content: center;
    white-space: nowrap;
}
.sprite {
    position: absolute;
    width: 0;
    height: 0;
}
.icon {
    width: 16px;
    height: 16px;
    flex: none;
}
.cal-day {
    font: bold 7px "Liberation Sans", sans-serif;
    text-anchor: middle;
}

/* Title bar */
.titlebar {
    display: flex;
    align-items: center;
    height: 22px;
    padding: 0 2px;
    flex: none;
}
.title {
    flex: 1;
    padding-left: 5px;
}
.win-btn {
    width: 45px;
    height: 21px;
    align-self: flex-start;
}
.close {
    background: #e81123;
}

/* Menu */
.menubar {
    display: flex;
    align-items: center;
    gap: 1px;
    height: 21px;
    padding-left: 7px;
    border-bottom: 2px solid #f0f0f0;
    flex: none;
}
.menubar > button {
    padding: 1px 7px 0;
}
.mdi {
    display: flex;
    gap: 2px;
    margin-left: auto;
}
.mdi button {
    width: 18px;
    height: 18px;
    border: 1px solid #e5e5e5;
}

/* Toolbar */
.toolbar {
    display: flex;
    align-items: center;
    height: 26px;
    padding-left: 2px;
    border-bottom: 1px solid #dcdcdc;
    flex: none;
}
.toolbar button {
    width: 23px;
    height: 22px;
}
.sep {
    width: 8px;
    height: 18px;
    background: linear-gradient(#8c8c8c, #8c8c8c) 2px 0 / 1px 100% no-repeat;
}

/* Form */
.workspace {
    flex: 1;
    min-height: 0;
    display: flex;
    flex-direction: column;
    padding: 0 5px 2px 1px;
    background: #f0f0f0;
    border: 1px solid #a0a0a0;
}
.form {
    display: flex;
    height: 159px;
    padding: 16px 0 0 10px;
    flex: none;
}
.form input {
    height: 26px;
    min-width: 0;
    padding: 0 3px 3px;
    background: #fff;
    border: 1px solid #7a7a7a;
}
.form input:read-only {
    background: #f0f0f0;
}
.form label {
    padding-top: 3px;
    white-space: nowrap;
}
.general {
    display: grid;
    grid-template-columns: 127px 133px 102px 35px;
    grid-template-rows: 30px 30px 28px 28px 27px;
    align-items: start;
}
.general .wide {
    grid-column: 2 / 4;
}
.general .half {
    width: 132px;
}
.general .strong {
    font-weight: bold;
}
.form .sum {
    font-weight: bold;
    text-align: right;
}
.form .price {
    text-align: right;
    padding-right: 1px;
}
.edit {
    justify-content: flex-start;
    height: 26px;
    padding-left: 6px;
}
.select {
    position: relative;
    height: 23px;
}
.select select {
    width: 100%;
    height: 100%;
    padding: 0 20px 1px 4px;
    appearance: none;
    background: #e1e1e1;
    border: 1px solid #adadad;
}
.chevron {
    position: absolute;
    right: 4px;
    top: 9px;
    width: 10px;
    height: 6px;
    pointer-events: none;
}
.dates {
    display: grid;
    grid-template-columns: 95px 74px 33px;
    grid-template-rows: 30px 28px 28px 28px;
    margin-top: 2px;
    align-items: start;
    align-content: start;
}
.checks {
    display: flex;
    flex-direction: column;
    justify-content: space-between;
    width: 137px;
    height: 141px;
    color: #6d6d6d;
}
.form .checks label {
    display: flex;
    align-items: center;
    height: 15px;
    padding: 0;
}
.form .checks input {
    appearance: none;
    width: 13px;
    height: 13px;
    margin-right: 3px;
    padding: 0;
    background: #fff;
    border: 1px solid #ccc;
}
.offer {
    width: 445px;
    padding-top: 17px;
}
.offer-row {
    display: flex;
    margin-bottom: 17px;
}
.offer-row label {
    width: 38px;
}
.offer-row input {
    width: 75px;
}
.offer-row .nr {
    width: 99px;
}
.offer-row .vom {
    width: 41px;
    margin-left: 20px;
}
.config {
    width: 452px;
}
.config h2 {
    margin: -3px 0 7px;
    padding-top: 1px;
    font-size: 11px;
    line-height: 15px;
    color: #6d6d6d;
    border-bottom: 1px solid #a0a0a0;
}
.config-body {
    display: flex;
    justify-content: space-between;
}
.config-actions {
    display: grid;
    grid-template-columns: 152px 118px 118px;
    grid-template-rows: 26px 26px;
    gap: 10px 9px;
    padding: 1px 0 0 1px;
}
.btn {
    background: #e1e1e1;
    border: 1px solid #adadad;
}
.order-type {
    display: flex;
    grid-column: 1 / 4;
}
.order-type label {
    width: 68px;
}
.order-type input {
    width: 146px;
}
.gear {
    width: 41px;
    height: 46px;
    border: 1px solid;
    border-color: #e3e3e3 #696969 #696969 #e3e3e3;
    box-shadow: inset 1px 1px #fff, inset -1px -1px #a0a0a0;
}
.status {
    margin-top: 32px;
    height: 27px;
    line-height: 22px;
    text-align: center;
    font-weight: bold;
    color: #008080;
    border: 1px solid #7a7a7a;
    box-shadow: inset 0 0 0 1px #fff;
}
.drop {
    width: 58px;
    margin: 36px 2px 0 auto;
}
.drop > svg {
    display: block;
    margin: 6px 0 0 8px;
}
.count {
    display: flex;
    align-items: center;
    justify-content: space-between;
    height: 31px;
    padding: 0 1px 0 8px;
    background: #fff;
    color: #888;
}
.count button {
    width: 19px;
    height: 19px;
    background: #e6e6e6;
    color: #fff;
}

/* Tabs */
.tabs {
    display: flex;
    align-items: flex-end;
    height: 24px;
    padding-left: 1px;
    flex: none;
}
.tabs button {
    height: 22px;
    padding: 0 4px;
    border: 1px solid #dcdcdc;
    border-width: 1px 1px 0 0;
}
.tabs .active {
    height: 25px;
    margin-bottom: -1px;
    padding: 0 5px 4px;
    background: #fff;
    z-index: 1;
}
.tab-page {
    flex: 1;
    min-height: 0;
    display: flex;
    flex-direction: column;
    padding: 14px 9px 12px 11px;
    background: #fff;
    border: 1px solid #dcdcdc;
}
.type-select {
    width: 201px;
    margin-bottom: 13px;
    flex: none;
}
.panes {
    flex: 1;
    min-height: 0;
    display: flex;
    gap: 3px;
}
.left {
    width: 384px;
    flex: none;
    display: flex;
    flex-direction: column;
    gap: 4px;
}
.box {
    display: flex;
    flex-direction: column;
    min-height: 0;
    padding: 1px;
    border: 1px solid #828790;
}
.files {
    flex: 1;
}
.folders {
    flex: none;
    height: 33%;
}
.file-area {
    position: relative;
    flex: 1;
    overflow: hidden;
}

/* Attachment table */
table {
    width: 100%;
    table-layout: fixed;
    border-collapse: collapse;
}
.c-sort {
    width: 20px;
}
.c-name {
    width: 217px;
}
.c-class {
    width: 118px;
}
th, td {
    padding: 0 3px;
    text-align: left;
    white-space: nowrap;
    overflow: hidden;
}
th {
    height: 23px;
    padding-left: 6px;
    font-weight: normal;
    border-right: 1px solid #e5e5e5;
}
th:first-child {
    padding: 0 1px;
    border: none;
}
th:last-child {
    padding-right: 0;
    border: none;
}
td {
    height: 21px;
    font-weight: bold;
}
td:nth-child(2) {
    border-right: 1px solid #808080;
}
td:nth-child(3) {
    padding-left: 4px;
    border-right: 1px solid #f0f0f0;
}
td .icon {
    margin-right: 3px;
    vertical-align: middle;
}
.selected td {
    background: #bfddf5;
}
.selected td:first-child {
    background: #9fcbef;
}
.selected td:nth-child(3) {
    background: #a0cbef;
    box-shadow: inset 0 0 0 1px #0078d7;
}
.sort {
    width: 18px;
    height: 22px;
    background: #e1e1e1;
    border: 1px solid #adadad;
}
.vscroll {
    position: absolute;
    top: 24px;
    right: 0;
    bottom: 0;
    width: 16px;
    display: flex;
    flex-direction: column;
    align-items: center;
    gap: 9px;
    padding: 5px 0;
    background: #f0f0f0;
}
.track {
    flex: 1;
    width: 100%;
}
.track .thumb {
    width: 100%;
    height: 34%;
    margin-top: 112px;
}
.thumb {
    background: #cdcdcd;
}
.hscroll {
    display: flex;
    align-items: center;
    height: 16px;
    padding: 0 4px;
    background: #f0f0f0;
    flex: none;
}
.hscroll .thumb {
    height: 15px;
    margin-left: 5px;
}
.short {
    width: 37px;
}
.long {
    width: 211px;
}
.end {
    margin-left: auto;
}
.last {
    margin-left: 10px;
}
.folder-list {
    flex: 1;
    overflow: hidden;
    padding-left: 9px;
    white-space: nowrap;
}
.folder-list h3 {
    margin: 4px 0;
    font-size: 11px;
    font-weight: normal;
}
.folder-list ul {
    margin: 0;
    padding: 0;
    list-style: none;
    line-height: 19px;
}

/* Document viewer */
.viewer {
    position: relative;
    flex: 1;
    min-width: 0;
    padding: 5px 1px 1px;
    background: #333;
    border: 1px solid #828790;
    box-shadow: inset 0 0 0 1px #fff;
}
.sheet {
    display: block;
    height: calc(100% - 40px);
    margin: 0 auto;
}
.sheet .ink {
    fill: none;
    stroke: #000;
}
.sheet .blue {
    fill: none;
    stroke: #0080ff;
}
.sheet .glass {
    fill: none;
    stroke: #606060;
}
.sheet .slab {
    fill: #fdeae2;
    stroke: #000;
}
.sheet-title {
    font: 24px "DejaVu Sans Condensed", "Noto Sans", sans-serif;
    text-anchor: middle;
}
.dim text {
    font: 7px "Liberation Sans", sans-serif;
}
.mark text {
    font: 4px "Liberation Sans", sans-serif;
}
.note text {
    font: 5px "Liberation Sans", sans-serif;
    stroke: #000;
    stroke-width: 0.2px;
}
.note .red {
    fill: #f00;
    stroke: #f00;
}
.plate text {
    font: bold 4px "DejaVu Sans", sans-serif;
}
.plate .firm {
    font-size: 6px;
}
.logo {
    font: 8px "Open Sans", sans-serif;
    fill: #fff;
}
.logo-sub {
    font: 3px "Open Sans", sans-serif;
    fill: #fff;
}
.viewer-tools {
    position: absolute;
    left: 6px;
    right: 7px;
    bottom: 8px;
    display: flex;
    align-items: center;
    gap: 5px;
}
.viewer-tools svg {
    fill: none;
    stroke: #808080;
    stroke-width: 2;
}
.viewer-tools .dim-btn svg {
    stroke: #555;
}
.fit {
    margin-left: 3px;
}
.pages {
    margin-left: auto;
    font-size: 14px;
    color: #e6e6e6;
}

/* Open windows */
.taskbar {
    display: flex;
    height: 25px;
    padding: 1px 0 1px 2px;
    flex: none;
}
.taskbar button {
    width: 120px;
    justify-content: flex-start;
    padding-left: 2px;
    gap: 4px;
    border: 1px solid transparent;
}
.taskbar .active {
    background: #cce8ff;
    border-color: #99d1ff;
}

/* Status bar */
.statusbar {
    display: flex;
    height: 24px;
    padding-top: 1px;
    line-height: 21px;
    background: #f0f0f0;
    border-top: 2px solid #d7d7d7;
    flex: none;
}
.statusbar span {
    border-right: 1px solid #d7d7d7;
    text-align: center;
}
.w20 {
    width: 20px;
}
.w30 {
    width: 30px;
}
.w50 {
    width: 50px;
}
.w116 {
    width: 116px;
}
.statusbar .client {
    width: 250px;
    padding-left: 4px;
    text-align: left;
}
```
